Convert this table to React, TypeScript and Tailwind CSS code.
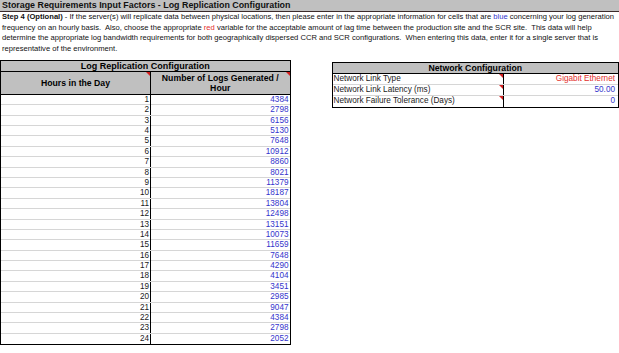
const LOGS = [
  4384, 2798, 6156, 5130, 7648, 10912, 8860, 8021, 11379, 18187, 13804, 12498,
  13151, 10073, 11659, 7648, 4290, 4104, 3451, 2985, 9047, 4384, 2798, 2052,
];

const NETWORK = [
  { label: "Network Link Type", value: "Gigabit Ethernet", color: "text-[#e3302c]" },
  { label: "Network Link Latency (ms)", value: "50.00", color: "text-[#3434cc]" },
  { label: "Network Failure Tolerance (Days)", value: "0", color: "text-[#3434cc]" },
];

// little red comment marker in a cell's top-right corner
function Flag() {
  return (
    <span className="absolute right-0 top-0 h-0 w-0 border-l-[4px] border-t-[4px] border-l-transparent border-t-[#d42020]" />
  );
}

function LogTable() {
  return (
    <section className="w-[291px] border border-black">
      <div className="h-[11px] border-b border-black bg-[#c0c0c0] text-center text-[9px] font-bold leading-[10px]">
        Log Replication Configuration
      </div>
      <div className="grid h-[23px] grid-cols-[150px_1fr] border-b border-black bg-[#c0c0c0] text-[8.7px] font-bold leading-[10px]">
        <div className="relative flex items-center justify-center border-r border-black">
          Hours in the Day
          <Flag />
        </div>
        <div className="relative flex flex-col items-center justify-center">
          <span>Number of Logs Generated /</span>
          <span>Hour</span>
          <Flag />
        </div>
      </div>
      {LOGS.map((n, i) => (
        <div
          key={i}
          className={`grid h-[10.4px] grid-cols-[150px_1fr] text-[8.2px] leading-[10px] ${
            i < LOGS.length - 1 ? "border-b border-[#d6d6d6]" : ""
          }`}
        >
          <div className="border-r border-black pr-[1px] text-right text-[#1a1a1a]">{i + 1}</div>
          <div className="pr-[1px] text-right text-[#3434cc]">{n}</div>
        </div>
      ))}
    </section>
  );
}

function NetworkTable() {
  return (
    <section className="ml-[41px] mt-[2px] w-[288px] border border-black">
      <div className="h-[11px] border-b border-black bg-[#c0c0c0] text-center text-[8.7px] font-bold leading-[10px]">
        Network Configuration
      </div>
      {NETWORK.map((row, i) => (
        <div
          key={row.label}
          className={`grid h-[11px] grid-cols-[171px_1fr] text-[8.2px] leading-[10px] ${
            i < NETWORK.length - 1 ? "border-b border-[#d6d6d6]" : ""
          }`}
        >
          <div className="relative border-r border-black pl-[1px] text-[#1a1a1a]">
            {row.label}
            <Flag />
          </div>
          <div className={`pr-[3px] text-right ${row.color}`}>{row.value}</div>
        </div>
      ))}
    </section>
  );
}

export default function App() {
  return (
    <div className="h-[353px] w-[619px] overflow-hidden bg-white font-['Liberation_Sans',Arial,sans-serif] text-black">
      <div className="h-[12px] border-b border-[#3b2b2b] bg-[#c0c0c0] pl-[2px] text-[8.9px] font-bold leading-[11px] text-[#111]">
        Storage Requirements Input Factors - Log Replication Configuration
      </div>
      <div className="px-[2px] text-[7.6px] leading-[10.7px] text-[#111]">
        <div className="whitespace-nowrap">
          <b>Step 4 (Optional)</b> - If the server(s) will replicate data between physical locations, then
          please enter in the appropriate information for cells that are{" "}
          <span className="text-[#3434cc]">blue</span> concerning your log generation
        </div>
        <div className="whitespace-nowrap">
          frequency on an hourly basis.&nbsp; Also, choose the appropriate{" "}
          <span className="text-[#e3302c]">red</span> variable for the acceptable amount of lag time
          between the production site and the SCR site.&nbsp; This data will help
        </div>
        <div className="whitespace-nowrap">
          determine the appropriate log bandwidth requirements for both geographically dispersed CCR
          and SCR configurations.&nbsp; When entering this data, enter it for a single server that is
        </div>
        <div className="whitespace-nowrap">representative of the environment.</div>
      </div>
      <div className="mt-[5px] flex items-start">
        <LogTable />
        <NetworkTable />
      </div>
    </div>
  );
}
